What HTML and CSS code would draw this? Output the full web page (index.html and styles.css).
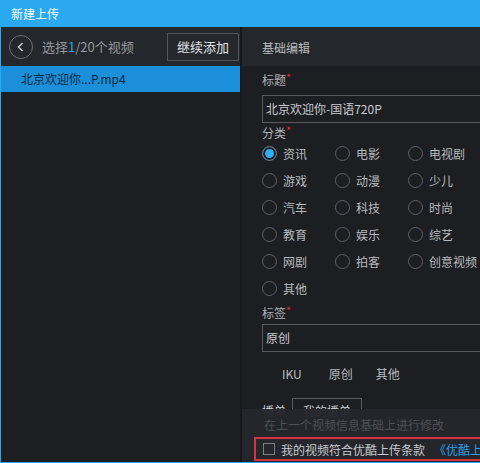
FILE: index.html
```html
<!DOCTYPE html>
<html lang="zh-CN">
<head>
    <meta charset="UTF-8">
    <title>新建上传</title>
    <link rel="stylesheet" href="styles.css">
</head>
<body>
    <div class="window">
        <div class="titlebar">新建上传</div>

        <div class="main">
            <!-- 左侧：已选视频列表 -->
            <div class="side">
                <div class="side-head">
                    <span class="back-btn">
                        <svg width="24" height="24" viewBox="0 0 24 24">
                            <circle cx="12" cy="12" r="11.5" fill="none" stroke="#6c6f74" stroke-width="1"/>
                            <path d="M13.5 8 L9.5 12 L13.5 16" fill="none" stroke="#cfd1d4" stroke-width="1.4"/>
                        </svg>
                    </span>
                    <span class="count">选择<em>1</em>/20个视频</span>
                    <button class="add-btn">继续添加</button>
                </div>
                <div class="file-item active">北京欢迎你...P.mp4</div>
            </div>

            <!-- 右侧：基础编辑 -->
            <div class="editor">
                <div class="editor-head">基础编辑</div>
                <div class="editor-body">
                    <div class="label label-first">标题<i>*</i></div>
                    <div class="field">北京欢迎你-国语720P</div>

                    <div class="label">分类<i>*</i></div>
                    <div class="radios">
                        <label class="radio checked"><span class="dot"></span>资讯</label>
                        <label class="radio"><span class="dot"></span>电影</label>
                        <label class="radio"><span class="dot"></span>电视剧</label>
                        <label class="radio"><span class="dot"></span>游戏</label>
                        <label class="radio"><span class="dot"></span>动漫</label>
                        <label class="radio"><span class="dot"></span>少儿</label>
                        <label class="radio"><span class="dot"></span>汽车</label>
                        <label class="radio"><span class="dot"></span>科技</label>
                        <label class="radio"><span class="dot"></span>时尚</label>
                        <label class="radio"><span class="dot"></span>教育</label>
                        <label class="radio"><span class="dot"></span>娱乐</label>
                        <label class="radio"><span class="dot"></span>综艺</label>
                        <label class="radio"><span class="dot"></span>网剧</label>
                        <label class="radio"><span class="dot"></span>拍客</label>
                        <label class="radio"><span class="dot"></span>创意视频</label>
                        <label class="radio"><span class="dot"></span>其他</label>
                    </div>

                    <div class="label label-tags">标签<i>*</i></div>
                    <div class="field field-tags">原创</div>

                    <div class="tag-hints">
                        <span>IKU</span>
                        <span>原创</span>
                        <span>其他</span>
                    </div>

                    <div class="tabs">
                        <span class="tab">播单</span>
                        <span class="tab tab-on">我的播单</span>
                    </div>
                </div>

                <!-- 底部浮层 -->
                <div class="footer">
                    <div class="hint">在上一个视频信息基础上进行修改</div>
                    <div class="agree">
                        <span class="checkbox"></span>
                        <span class="agree-text">我的视频符合优酷上传条款</span>
                        <a class="agree-link">《优酷上传条款》</a>
                    </div>
                </div>
            </div>
        </div>
    </div>
</body>
</html>
```

FILE: styles.css
```css
* { margin: 0; padding: 0; box-sizing: border-box; }
body {
    background: #1c1e22;
    font-family: "Noto Sans CJK SC", "Noto Sans", sans-serif;
    font-size: 12px;
    color: #c4c6c9;
    overflow: hidden;
}
.window {
    width: 480px;
    height: 463px;
    display: flex;
    flex-direction: column;
    border-left: 1px solid #2ba9f0;
    border-bottom: 1px solid #2ba9f0;
    overflow: hidden;
}
.titlebar {
    height: 27px;
    flex-shrink: 0;
    background: #2ba9f0;
    color: #f4f9fd;
    font-size: 12px;
    line-height: 27px;
    padding-left: 10px;
}
.main {
    flex: 1;
    display: flex;
    min-height: 0;
}

/* 左侧 */
.side {
    width: 241px;
    flex-shrink: 0;
    background: #1c1e22;
    border-right: 2px solid #16181b;
}
.side-head {
    height: 39px;
    background: #24272c;
    display: flex;
    align-items: center;
    padding-left: 8px;
}
.back-btn {
    width: 24px;
    height: 24px;
    display: flex;
}
.count {
    margin-left: 9px;
    font-size: 13px;
    color: #96999d;
}
.count em {
    font-style: normal;
    color: #2ba2e6;
}
.add-btn {
    margin-left: auto;
    margin-right: 1px;
    width: 72px;
    height: 28px;
    background: #24272c;
    border: 1px solid #53565b;
    color: #e2e3e5;
    font-family: inherit;
    font-size: 13px;
}
.file-item {
    height: 26px;
    line-height: 26px;
    padding-left: 20px;
    font-size: 12px;
}
.file-item.active {
    background: #1b8fd9;
    color: #0f2a40;
}

/* 右侧 */
.editor {
    flex: 1;
    min-width: 0;
    position: relative;
    overflow: hidden;
}
.editor-head {
    height: 39px;
    background: #24272c;
    line-height: 41px;
    padding-left: 20px;
    color: #b9bbbe;
}
.editor-body {
    padding-left: 20px;
}
.label {
    height: 20px;
    line-height: 20px;
    color: #aeb0b3;
}
.label i {
    font-style: normal;
    color: #e0283c;
    font-size: 11px;
    vertical-align: top;
    line-height: 14px;
}
.label-first { margin-top: 4px; }
.field {
    width: 300px;
    height: 28px;
    margin-top: 5px;
    border: 1px solid #56595e;
    line-height: 26px;
    padding-left: 3px;
    color: #c9cbce;
}
.radios {
    display: grid;
    grid-template-columns: 73px 73px 73px;
    row-gap: 7px;
}
.radio {
    height: 20px;
    display: flex;
    align-items: center;
    white-space: nowrap;
    color: #b9bbbe;
}
.dot {
    width: 15px;
    height: 15px;
    border: 1px solid #5d6065;
    border-radius: 50%;
    margin-right: 6px;
    flex-shrink: 0;
}
.radio.checked .dot {
    background: #33aef4;
    box-shadow: inset 0 0 0 2px #1c1e22;
    border-color: #6b6e73;
}
.label-tags { margin-top: 5px; }
.field-tags { margin-top: 1px; }
.tag-hints {
    margin-top: 12px;
    height: 20px;
    line-height: 20px;
    display: flex;
    padding-left: 20px;
    color: #b9bbbe;
}
.tag-hints span { margin-right: 23px; }
.tag-hints span:first-child { margin-right: 27px; }
.tabs {
    margin-top: 13px;
    display: flex;
    align-items: flex-end;
    height: 26px;
}
.tab {
    line-height: 24px;
    color: #c9cbce;
}
.tab-on {
    margin-left: 6px;
    padding: 0 10px;
    border: 1px solid #56595e;
    border-bottom: none;
}

/* 底部浮层 */
.footer {
    position: absolute;
    left: 0;
    right: 0;
    bottom: 0;
    height: 53px;
    background: rgba(36, 39, 44, 0.96);
    padding-left: 12px;
}
.hint {
    height: 18px;
    line-height: 18px;
    margin-top: 7px;
    padding-left: 10px;
    color: #4c5055;
}
.agree {
    margin-top: 3px;
    height: 24px;
    width: 260px;
    border: 2px solid #d3343e;
    display: flex;
    align-items: center;
    padding-left: 7px;
    white-space: nowrap;
}
.checkbox {
    width: 12px;
    height: 12px;
    border: 1px solid #7c7f84;
    flex-shrink: 0;
}
.agree-text {
    margin-left: 6px;
    color: #c9cbce;
}
.agree-link {
    margin-left: 9px;
    color: #2a9fe8;
}
```
